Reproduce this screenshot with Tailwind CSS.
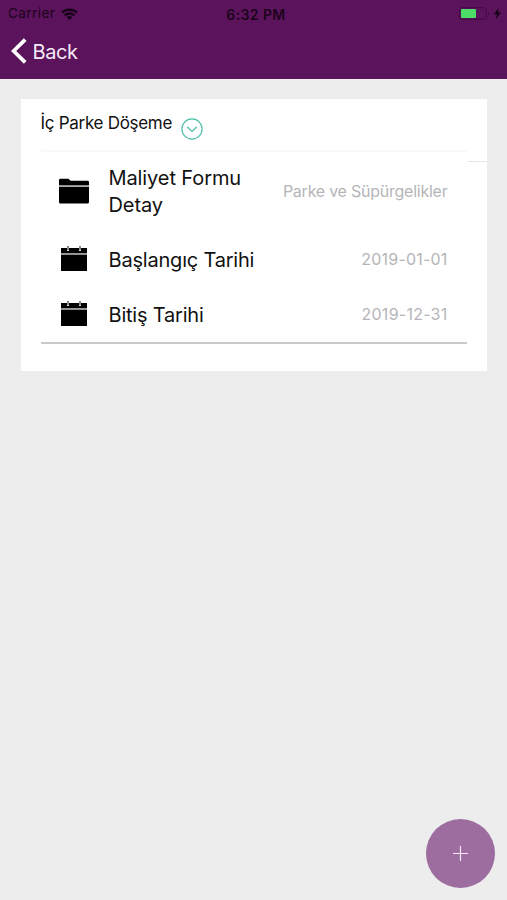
<!DOCTYPE html>
<html lang="tr">
<head>
    <meta charset="UTF-8">
    <meta name="viewport" content="width=device-width, initial-scale=1.0">
    <script src="https://cdn.jsdelivr.net/npm/@tailwindcss/browser@4"></script>
    <title>İç Parke Döşeme</title>
</head>
<body class="h-screen overflow-hidden bg-[#ededed] font-['Inter',sans-serif] text-[#111]">
    <header class="h-[79px] bg-[#5b145b]">
        <!-- Status bar -->
        <div class="grid h-[27px] grid-cols-3 items-center pl-2 pr-[6px] text-[13.5px] leading-none text-[#1b031c]">
            <div class="flex items-center gap-[6px]">
                <span class="pt-px tracking-[0.45px]">Carrier</span>
                <svg class="h-3 w-[17px]" viewBox="0 0 17 12" fill="none" stroke="#180219" stroke-width="2.3">
                    <path d="M1 4.6a10.8 10.8 0 0 1 15 0M3.7 7.4a7 7 0 0 1 9.6 0" />
                    <path d="M8.5 12 5.8 9.2a4 4 0 0 1 5.4 0z" fill="#180219" stroke="none" />
                </svg>
            </div>
            <span class="pl-[3px] pt-[2px] text-center text-[14px] font-semibold tracking-[0.4px]">6:32 PM</span>
            <div class="flex items-center justify-end gap-1">
                <svg class="h-[13px] w-[31px]" viewBox="0 0 31 13">
                    <rect x=".75" y=".75" width="26.5" height="11.5" rx="2.5" fill="none" stroke="#420743" />
                    <rect x="2" y="2" width="15" height="9" rx="1" fill="#4cdc68" />
                    <path d="M29 4.5q2 2 0 4z" fill="#420743" />
                </svg>
                <svg class="h-[11px] w-[7px]" viewBox="0 0 7 11" fill="#140116"><path d="M4.5 0 0 6.3h3L2 11l5-6.6H4z" /></svg>
            </div>
        </div>
        <a href="#" class="flex h-[49px] items-center gap-[6px] pl-[10.5px] text-[20px] text-[#f6e9f7]">
            <svg class="mb-px h-[26px] w-4" viewBox="0 0 16 26" fill="none" stroke="#fff" stroke-width="3.8"><path d="M14.2 1.7 2.6 13l11.6 11.3" /></svg>
            <span class="pt-px tracking-[-0.4px]">Back</span>
        </a>
    </header>

    <main class="px-[20.5px] pt-[19.5px]">
        <section class="relative h-[272.5px] bg-white px-5">
            <div class="flex h-[53px] items-start border-b-2 border-[#f9f9f9] pt-[11px]">
                <h1 class="text-[17px] leading-[26px] tracking-[-0.29px]">İç Parke Döşeme</h1>
                <svg class="ml-[9px] mt-2 size-[22px]" viewBox="0 0 22 22" fill="none" stroke="#4dbfa6" stroke-width="1.2">
                    <circle cx="11" cy="11" r="10.1" />
                    <path d="m6.2 8.8 4.8 4.7 4.8-4.7" />
                </svg>
            </div>
            <span class="absolute right-0 top-[62.5px] h-px w-[19px] bg-[#e4e4e4]"></span>

            <ul class="border-b-2 border-[#c9c9c9] text-[20px] leading-[27px] tracking-[-0.2px]">
                <li class="flex h-20 items-center pl-[18px] pr-[19px]">
                    <svg class="mb-[2px] h-[26px] w-[30px] shrink-0" viewBox="0 0 30 26">
                        <path d="M0 7.4V2.2Q0 .8 1.4.8h8l2.2 1.9h16.8Q30 2.7 30 4.1v3.3zM0 8.9h30v15.2q0 1.5-1.5 1.5h-27Q0 25.6 0 24.1z" />
                        <path d="M0 8.1h30" stroke="#999" stroke-width="1.4" />
                    </svg>
                    <span class="ml-5 w-[150px] pt-px tracking-[-0.1px]">Maliyet Formu Detay</span>
                    <span class="ml-auto text-[16px] tracking-[-0.24px] text-[#b5b5b8]">Parke ve Süpürgelikler</span>
                </li>
                <li class="flex h-[55px] items-center pl-5 pr-[19px]">
                    <svg class="mb-[2px] h-[25px] w-[26px] shrink-0" viewBox="0 0 26 25">
                        <path d="M0 2h26v5H0zM0 8.5h26V25H0z" />
                        <path d="M0 7.8h26" stroke="#999" stroke-width="1.6" />
                        <path d="M7 0v5M19 0v5" stroke="#ddd" stroke-width="2" />
                        <path d="M7 0v4M19 0v4" stroke="#333" stroke-width="1" />
                    </svg>
                    <span class="ml-[22px] pt-[2px]">Başlangıç Tarihi</span>
                    <span class="ml-auto pt-px text-[16px] tracking-[0.2px] text-[#b5b5b8]">2019-01-01</span>
                </li>
                <li class="flex h-[55px] items-center pl-5 pr-[19px]">
                    <svg class="mb-[2px] h-[25px] w-[26px] shrink-0" viewBox="0 0 26 25">
                        <path d="M0 2h26v5H0zM0 8.5h26V25H0z" />
                        <path d="M0 7.8h26" stroke="#999" stroke-width="1.6" />
                        <path d="M7 0v5M19 0v5" stroke="#ddd" stroke-width="2" />
                        <path d="M7 0v4M19 0v4" stroke="#333" stroke-width="1" />
                    </svg>
                    <span class="ml-[22px] pt-[2px]">Bitiş Tarihi</span>
                    <span class="ml-auto pt-px text-[16px] tracking-[0.25px] text-[#b5b5b8]">2019-12-31</span>
                </li>
            </ul>
        </section>
    </main>

    <button class="fixed bottom-3 right-3 flex size-[69px] items-center justify-center rounded-full bg-[#9c6d9e]">
        <svg class="size-[15px]" viewBox="0 0 15 15" stroke="#f8e8fa" stroke-width="1.2"><path d="M7.5 0v15M0 7.5h15" /></svg>
    </button>
</body>
</html>
